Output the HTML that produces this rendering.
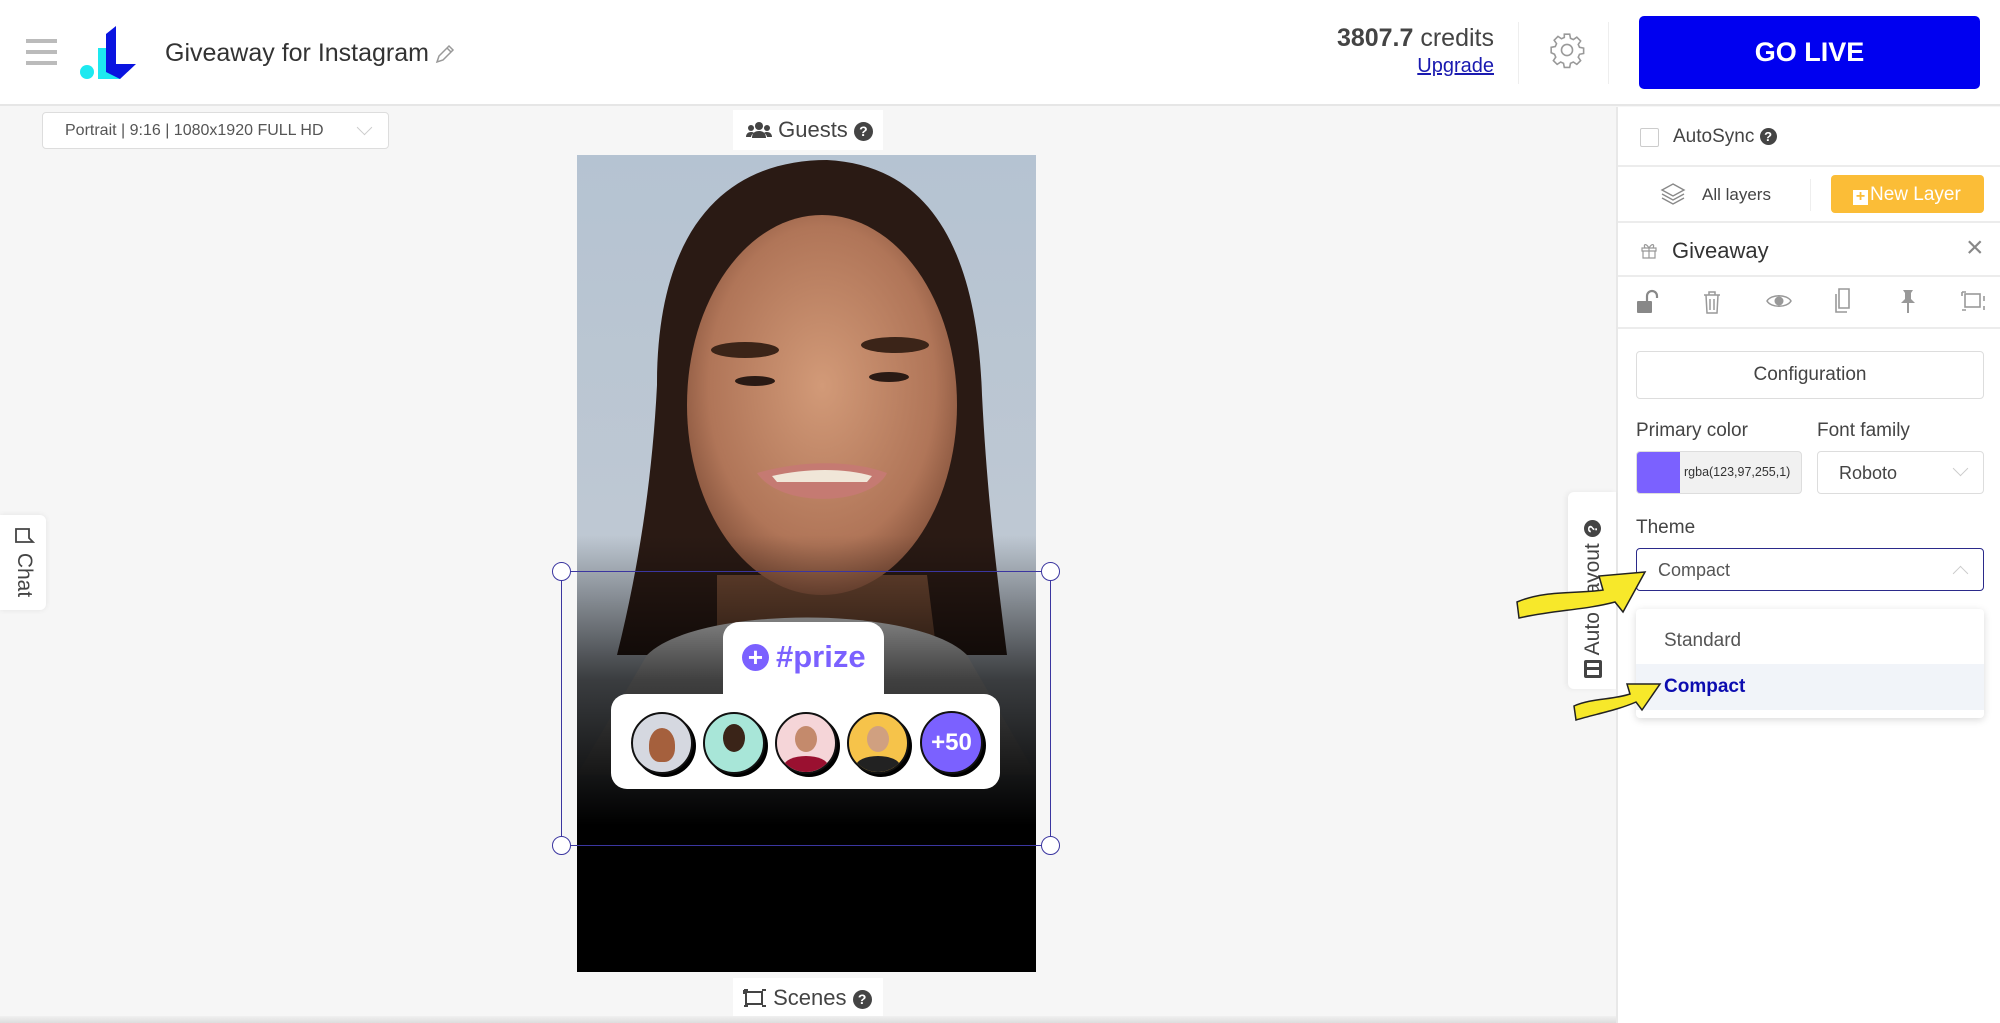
<!DOCTYPE html>
<html><head><meta charset="utf-8">
<style>
*{box-sizing:border-box;margin:0;padding:0}
body{width:2000px;height:1023px;overflow:hidden;background:#f6f6f6;font-family:"Liberation Sans",sans-serif;color:#333;position:relative}
.abs{position:absolute}
.hdr{left:0;top:0;width:2000px;height:106px;background:#fff;border-bottom:2px solid #e6e6e6}
.rp{left:1616px;top:107px;width:384px;height:916px;background:#fff;border-left:2px solid #e8e8e8}
.row{position:absolute;left:0;width:384px;border-bottom:2px solid #ececec}
.sel{border:1.5px solid #ddd;border-radius:4px;background:#fff}
.chev{width:11px;height:11px;border-right:1.5px solid #aaa;border-bottom:1.5px solid #aaa;transform:rotate(45deg)}
</style></head><body>
<div class="abs hdr"></div>
<div class="abs" style="left:26px;top:39px;width:31px;height:4px;background:#bbb"></div>
<div class="abs" style="left:26px;top:50px;width:31px;height:4px;background:#bbb"></div>
<div class="abs" style="left:26px;top:61px;width:31px;height:4px;background:#bbb"></div>
<svg class="abs" style="left:78px;top:24px" width="70" height="56" viewBox="0 0 70 56">
<circle cx="9" cy="48" r="7" fill="#1de9f0"/>
<polygon points="20,24 28,24 28,48 48,48 42,55 20,55" fill="#1de9f0"/>
<polygon points="28,10 38,2 38,40 58,40 42,55 28,48" fill="#0a14e0"/>
</svg>
<div class="abs" style="left:165px;top:39px;font-size:25px;color:#333">Giveaway for Instagram</div>
<svg class="abs" style="left:434px;top:43px" width="22" height="22" viewBox="0 0 22 22"><path d="M3 19 L5 13 L15 3 L19 7 L9 17 Z M13 5 L17 9" fill="none" stroke="#999" stroke-width="1.5"/></svg>
<div class="abs" style="right:506px;top:24px;font-size:25px;color:#444"><b>3807.7</b> credits</div>
<div class="abs" style="right:506px;top:55px;font-size:20px;color:#1a1ab0;text-decoration:underline">Upgrade</div>
<div class="abs" style="left:1518px;top:22px;width:1px;height:62px;background:#eee"></div>
<svg class="abs" style="left:1548px;top:31px" width="38" height="38" viewBox="0 0 24 24"><path d="M12 8.5a3.5 3.5 0 1 0 0 7 3.5 3.5 0 0 0 0-7z M10.3 2h3.4l.5 2.6 1.8.8 2.2-1.5 2.4 2.4-1.5 2.2.8 1.8 2.6.5v3.4l-2.6.5-.8 1.8 1.5 2.2-2.4 2.4-2.2-1.5-1.8.8-.5 2.6h-3.4l-.5-2.6-1.8-.8-2.2 1.5-2.4-2.4 1.5-2.2-.8-1.8L2 13.7v-3.4l2.6-.5.8-1.8-1.5-2.2 2.4-2.4 2.2 1.5 1.8-.8z" fill="none" stroke="#999" stroke-width="1"/></svg>
<div class="abs" style="left:1608px;top:22px;width:1px;height:62px;background:#eee"></div>
<div class="abs" style="left:1639px;top:16px;width:341px;height:73px;background:#0000f0;border-radius:5px;color:#fff;font-weight:bold;font-size:27px;text-align:center;line-height:73px">GO LIVE</div>

<div class="abs sel" style="left:42px;top:112px;width:347px;height:37px;font-size:16px;color:#555;padding:9px 0 0 22px">Portrait | 9:16 | 1080x1920 FULL HD</div>
<div class="abs chev" style="left:359px;top:122px;border-color:#ccc"></div>
<div class="abs" style="left:733px;top:110px;width:150px;height:40px;background:#fff;font-size:22px;color:#444;padding:7px 0 0 13px">
<svg width="26" height="18" viewBox="0 0 26 18" style="vertical-align:-2px"><circle cx="13" cy="5" r="4" fill="#444"/><circle cx="5" cy="7" r="3" fill="#444"/><circle cx="21" cy="7" r="3" fill="#444"/><path d="M6 17c0-5 3-7 7-7s7 2 7 7z M0 16c0-3 2-5 5-5 1 0 2 0 3 1-2 1-3 3-3 4z M26 16c0-3-2-5-5-5-1 0-2 0-3 1 2 1 3 3 3 4z" fill="#444"/></svg>
Guests <span style="display:inline-block;width:19px;height:19px;border-radius:50%;background:#444;color:#fff;font-size:14px;font-weight:bold;text-align:center;line-height:19px;vertical-align:1px">?</span></div>

<div class="abs" style="left:577px;top:155px;width:459px;height:817px;background:#000;overflow:hidden">
<svg width="459" height="817" viewBox="0 0 459 817">
<defs>
<linearGradient id="sky" x1="0" y1="0" x2="0" y2="1"><stop offset="0" stop-color="#b5c3d2"/><stop offset="1" stop-color="#c9ced4"/></linearGradient>
<radialGradient id="skin" cx="0.5" cy="0.45" r="0.6"><stop offset="0" stop-color="#d29a78"/><stop offset="0.7" stop-color="#b07558"/><stop offset="1" stop-color="#7a4a35"/></radialGradient>
<linearGradient id="fade" x1="0" y1="0" x2="0" y2="1"><stop offset="0" stop-color="#000" stop-opacity="0"/><stop offset="0.5" stop-color="#000" stop-opacity="0.7"/><stop offset="1" stop-color="#000"/></linearGradient>
</defs>
<rect width="459" height="817" fill="url(#sky)"/>
<path d="M80 230 C80 60 160 5 250 5 C350 10 400 90 405 240 C410 340 420 420 430 500 L40 500 C60 420 75 330 80 230Z" fill="#2a1a14"/>
<path d="M140 420 L140 500 L360 500 L350 420Z" fill="#6b4530"/>
<path d="M70 500 C120 450 340 450 390 500 L459 620 L0 620Z" fill="#d5d5d5"/>
<ellipse cx="245" cy="250" rx="135" ry="190" fill="url(#skin)"/>
<ellipse cx="168" cy="195" rx="34" ry="8" fill="#3b2418"/>
<ellipse cx="318" cy="190" rx="34" ry="8" fill="#3b2418"/>
<ellipse cx="178" cy="226" rx="20" ry="5" fill="#2a1a14"/>
<ellipse cx="312" cy="222" rx="20" ry="5" fill="#2a1a14"/>
<path d="M180 318 C225 305 275 305 310 318 C295 350 205 355 180 318Z" fill="#c57a72"/>
<path d="M195 321 C230 313 268 313 295 321 L290 327 L200 327Z" fill="#f0e6d8"/>
<rect y="380" width="459" height="290" fill="url(#fade)"/>
<rect y="669" width="459" height="148" fill="#000"/>
</svg>
</div>
<div class="abs" style="left:561px;top:571px;width:490px;height:275px;border:1.5px solid #3b36a0"></div>
<div class="abs" style="left:552px;top:562px;width:19px;height:19px;border-radius:50%;border:1.5px solid #3b36a0;background:#fff"></div>
<div class="abs" style="left:1041px;top:562px;width:19px;height:19px;border-radius:50%;border:1.5px solid #3b36a0;background:#fff"></div>
<div class="abs" style="left:552px;top:836px;width:19px;height:19px;border-radius:50%;border:1.5px solid #3b36a0;background:#fff"></div>
<div class="abs" style="left:1041px;top:836px;width:19px;height:19px;border-radius:50%;border:1.5px solid #3b36a0;background:#fff"></div>
<div class="abs" style="left:723px;top:622px;width:161px;height:80px;background:#fff;border-radius:16px 16px 0 0"></div>
<div class="abs" style="left:611px;top:694px;width:389px;height:95px;background:#fff;border-radius:16px"></div>
<div class="abs" style="left:742px;top:644px;width:27px;height:27px;border-radius:50%;background:#7b61ff;color:#fff;font-size:26px;font-weight:bold;text-align:center;line-height:27px">+</div>
<div class="abs" style="left:776px;top:639px;font-size:31px;font-weight:bold;color:#7b61ff">#prize</div>
<div class="abs" style="left:631px;top:712px;width:62px;height:62px;border-radius:50%;background:#d5d8e0;border:2px solid #111;box-shadow:3px 3px 0 #000"><div style="margin:14px auto 0;width:26px;height:34px;border-radius:50% 50% 40% 40%;background:#a5603d"></div></div>
<div class="abs" style="left:703px;top:712px;width:62px;height:62px;border-radius:50%;background:#a8e6d8;border:2px solid #111;box-shadow:3px 3px 0 #000"><div style="margin:10px auto 0;width:22px;height:28px;border-radius:50%;background:#3a2418"></div></div>
<div class="abs" style="left:775px;top:712px;width:62px;height:62px;border-radius:50%;background:#f5d5d8;border:2px solid #111;box-shadow:3px 3px 0 #000;overflow:hidden"><div style="margin:12px auto 0;width:22px;height:26px;border-radius:50%;background:#c48a6c"></div><div style="margin:4px auto 0;width:44px;height:20px;border-radius:50% 50% 0 0;background:#9a1030"></div></div>
<div class="abs" style="left:847px;top:712px;width:62px;height:62px;border-radius:50%;background:#f6c34a;border:2px solid #111;box-shadow:3px 3px 0 #000;overflow:hidden"><div style="margin:12px auto 0;width:22px;height:26px;border-radius:50%;background:#d0a080"></div><div style="margin:4px auto 0;width:44px;height:20px;border-radius:50% 50% 0 0;background:#222"></div></div>
<div class="abs" style="left:920px;top:711px;width:63px;height:63px;border-radius:50%;background:#7b61ff;border:2px solid #111;box-shadow:3px 3px 0 #000;color:#fff;font-weight:bold;font-size:24px;text-align:center;line-height:59px">+50</div>

<div class="abs" style="left:733px;top:978px;width:150px;height:40px;background:#fff;font-size:22px;color:#444;padding:7px 0 0 10px">
<svg width="24" height="20" viewBox="0 0 24 20" style="vertical-align:-3px"><rect x="3" y="4" width="16" height="12" fill="none" stroke="#444" stroke-width="2"/><path d="M1 2h4M1 2v4M23 2h-4M23 18h-4M1 18h4" stroke="#444" stroke-width="2"/></svg>
Scenes <span style="display:inline-block;width:19px;height:19px;border-radius:50%;background:#444;color:#fff;font-size:14px;font-weight:bold;text-align:center;line-height:19px;vertical-align:1px">?</span></div>
<div class="abs" style="left:0;top:1016px;width:1616px;height:7px;background:linear-gradient(#f0f0f0,#ddd)"></div>

<div class="abs" style="left:0;top:515px;width:46px;height:95px;background:#fff;border-radius:0 6px 6px 0;box-shadow:0 0 6px rgba(0,0,0,.08)">
<div style="position:absolute;left:12px;top:10px;writing-mode:vertical-rl;font-size:21px;color:#444">
<svg width="20" height="22" viewBox="0 0 20 22" style="transform:rotate(-90deg)"><path d="M4 3h13v13H8l-4 4z" fill="none" stroke="#444" stroke-width="1.8"/></svg> Chat</div></div>

<div class="abs rp">
<div class="row" style="top:0;height:60px">
<div class="abs" style="left:22px;top:21px;width:19px;height:19px;border:1.5px solid #ccc;border-radius:2px"></div>
<div class="abs" style="left:55px;top:19px;font-size:19px;color:#444">AutoSync <span style="display:inline-block;width:17px;height:17px;border-radius:50%;background:#444;color:#fff;font-size:13px;font-weight:bold;text-align:center;line-height:17px;vertical-align:1px">?</span></div></div>
<div class="row" style="top:60px;height:56px">
<svg class="abs" style="left:42px;top:14px" width="26" height="26" viewBox="0 0 26 26"><path d="M13 3L24 9 13 15 2 9Z M2 13l11 6 11-6 M2 17l11 6 11-6" fill="none" stroke="#888" stroke-width="1.4"/></svg>
<div class="abs" style="left:84px;top:18px;font-size:17px;color:#444">All layers</div>
<div class="abs" style="left:192px;top:12px;width:1px;height:32px;background:#eee"></div>
<div class="abs" style="left:213px;top:8px;width:153px;height:38px;background:#fbbd37;border-radius:4px;color:#fff;font-size:19px;padding:9px 0 0 22px"><span style="display:inline-block;width:15px;height:15px;background:#fff;color:#fbbd37;font-size:16px;line-height:14px;text-align:center;font-weight:bold;vertical-align:-1px;margin-right:2px">+</span>New Layer</div></div>
<div class="row" style="top:116px;height:54px">
<svg class="abs" style="left:22px;top:18px" width="18" height="18" viewBox="0 0 18 18"><path d="M2 7h14v3H2zM3 10h12v7H3zM9 7v10M9 7C6 2 3 3 5 7M9 7c3-5 6-4 4 0" fill="none" stroke="#999" stroke-width="1.2"/></svg>
<div class="abs" style="left:54px;top:15px;font-size:22px;color:#333">Giveaway</div>
<div class="abs" style="left:348px;top:8px;font-size:30px;color:#888">×</div></div>
<div class="row" style="top:170px;height:52px">
<svg class="abs" style="left:18px;top:12px" width="24" height="26" viewBox="0 0 24 26"><rect x="1" y="12" width="15" height="12" rx="1" fill="#888"/><path d="M11 12V7a5 5 0 0 1 10 0v2" fill="none" stroke="#888" stroke-width="2.2"/></svg>
<svg class="abs" style="left:84px;top:12px" width="20" height="26" viewBox="0 0 20 26"><path d="M2 6h16M7 6V3h6v3M4 6l1 18h10l1-18M8 10v11M12 10v11" fill="none" stroke="#999" stroke-width="1.5"/></svg>
<svg class="abs" style="left:148px;top:15px" width="26" height="18" viewBox="0 0 26 18"><path d="M1 9C5 2 21 2 25 9 21 16 5 16 1 9Z" fill="none" stroke="#999" stroke-width="1.5"/><circle cx="13" cy="9" r="4.5" fill="#999"/></svg>
<svg class="abs" style="left:214px;top:11px" width="22" height="26" viewBox="0 0 22 26"><path d="M7 1h10v19H7zM4 6v18h11" fill="none" stroke="#999" stroke-width="1.6"/></svg>
<svg class="abs" style="left:280px;top:12px" width="20" height="26" viewBox="0 0 20 26"><path d="M5 1h10l-2 3v6l4 4H3l4-4V4z" fill="#999"/><path d="M10 14v10" stroke="#999" stroke-width="2"/></svg>
<svg class="abs" style="left:342px;top:13px" width="26" height="22" viewBox="0 0 26 22"><rect x="5" y="4" width="15" height="13" fill="none" stroke="#999" stroke-width="1.6"/><path d="M2 2v4M2 2h4M24 20v-4M2 20h4M24 6v5" stroke="#999" stroke-width="1.6"/></svg></div>
<div class="abs sel" style="left:18px;top:244px;width:348px;height:48px;font-size:19px;color:#444;text-align:center;line-height:45px">Configuration</div>
<div class="abs" style="left:18px;top:313px;font-size:19px;color:#444">Primary color</div>
<div class="abs" style="left:199px;top:313px;font-size:19px;color:#444">Font family</div>
<div class="abs" style="left:18px;top:344px;width:166px;height:43px;border:1.5px solid #ddd;border-radius:4px;background:#f1f1f1;overflow:hidden">
<div style="position:absolute;left:0;top:0;width:43px;height:43px;background:#7b61ff"></div>
<div style="position:absolute;left:47px;top:13px;font-size:12.5px;color:#333">rgba(123,97,255,1)</div></div>
<div class="abs sel" style="left:199px;top:344px;width:167px;height:43px;font-size:18px;color:#444;padding:11px 0 0 21px">Roboto</div>
<div class="abs chev" style="left:337px;top:356px;border-color:#ccc"></div>
<div class="abs" style="left:18px;top:410px;font-size:19px;color:#444">Theme</div>
<div class="abs" style="left:18px;top:441px;width:348px;height:43px;border:1.5px solid #2b2a8a;border-radius:4px;font-size:18px;color:#555;padding:11px 0 0 21px">Compact</div>
<div class="abs chev" style="left:337px;top:461px;border-color:#ccc;transform:rotate(225deg)"></div>
<div class="abs" style="left:18px;top:502px;width:348px;height:109px;background:#fff;border-radius:4px;box-shadow:0 2px 8px rgba(0,0,0,.15)">
<div style="position:absolute;left:28px;top:21px;font-size:19px;color:#555">Standard</div>
<div style="position:absolute;left:0;top:55px;width:348px;height:46px;background:#f1f4f9"></div>
<div style="position:absolute;left:28px;top:67px;font-size:19px;color:#0c0cb0;font-weight:bold">Compact</div></div>
</div>
<div class="abs" style="left:1568px;top:492px;width:48px;height:197px;background:#fff;border-radius:6px 0 0 6px;box-shadow:-2px 0 6px rgba(0,0,0,.06)">
<div style="position:absolute;left:13px;top:12px;writing-mode:vertical-rl;transform:rotate(180deg);font-size:21px;color:#444;height:174px">
<span style="display:inline-block;width:18px;height:18px;border:3px solid #444;border-radius:2px;background:linear-gradient(#444,#444) center/100% 3px no-repeat"></span> Auto Layout <span style="display:inline-block;width:17px;height:17px;border-radius:50%;background:#444;color:#fff;font-size:13px;font-weight:bold;text-align:center;line-height:17px">?</span></div></div>
<svg class="abs" style="left:1515px;top:562px" width="135" height="60" viewBox="0 0 135 60"><path d="M2 40 C30 28 60 32 88 28 L84 14 L130 10 L108 50 L100 40 C70 48 40 48 4 56Z" fill="#f7e82a" stroke="#222" stroke-width="1.5"/></svg>
<svg class="abs" style="left:1572px;top:680px" width="90" height="42" viewBox="0 0 90 42"><path d="M2 26 C20 18 40 20 58 14 L55 4 L88 4 L70 30 L64 22 C46 30 24 34 4 40Z" fill="#f7e82a" stroke="#222" stroke-width="1.5"/></svg>
</body></html>
